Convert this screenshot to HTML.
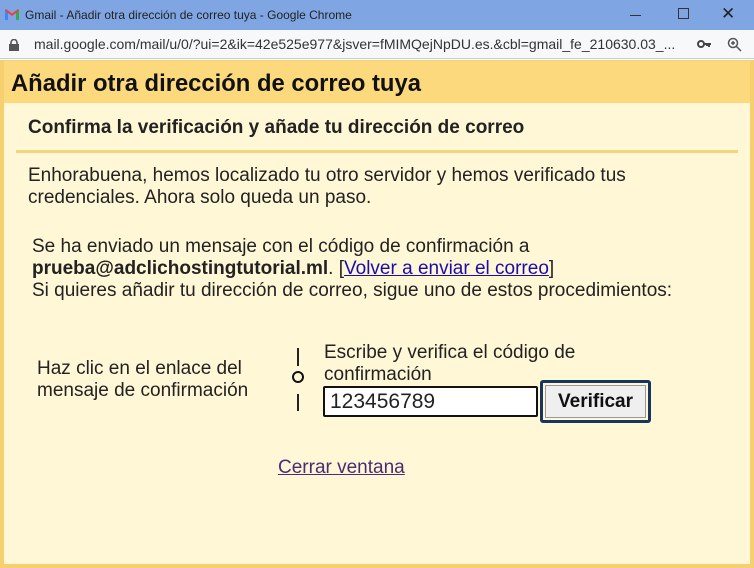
<!DOCTYPE html>
<html><head><meta charset="utf-8"><style>
*{margin:0;padding:0;box-sizing:border-box}
body{width:754px;height:568px;overflow:hidden;font-family:"Liberation Sans",Arial,sans-serif;background:#fff;position:relative}
.tb{position:absolute;left:0;top:0;width:754px;height:30px;background:#7fa6e3;color:#222;font-size:12px}
.ab{position:absolute;left:0;top:30px;width:754px;height:29px;background:#f7f8fa;border-bottom:1px solid #ccc;font-size:14px;color:#333}
.frame{position:absolute;left:0;top:60px;width:754px;height:508px;background:#fff7d6;border:4px solid #f6d06e;border-top:1px solid #f1d27a}
.hd{position:absolute;left:0;top:0;width:746px;height:42px;background:#fcd97c;font-size:23.8px;font-weight:bold;color:#111;padding:9px 0 0 7px}
.t{position:absolute;color:#222;font-size:19px;line-height:22px}
a{color:#1a0dab}
</style></head><body>
<div class="tb">
<svg style="position:absolute;left:5px;top:9px" width="14" height="11" viewBox="0 0 14 11"><path d="M0 1v10h3V4l4 3 4-3v7h3V1l-1-1-6 4.5L1 0z" fill="#ea4335"/><path d="M0 1v10h3V4z" fill="#4285f4"/><path d="M14 1v10h-3V4z" fill="#34a853"/></svg>
<span style="position:absolute;left:25px;top:8px">Gmail - Añadir otra dirección de correo tuya - Google Chrome</span>
<div style="position:absolute;left:630px;top:15px;width:11px;height:1px;background:#333"></div>
<div style="position:absolute;left:678px;top:8px;width:11px;height:11px;border:1px solid #333"></div>
<span style="position:absolute;left:721px;top:4px;font-size:17px;font-weight:300">✕</span>
</div>
<div class="ab">
<svg style="position:absolute;left:9px;top:9px" width="10" height="12" viewBox="0 0 10 12"><rect x="0" y="5" width="10" height="7" fill="#555"/><path d="M2 5V3.5a3 3 0 016 0V5" stroke="#555" stroke-width="1.6" fill="none"/></svg>
<span style="position:absolute;left:34px;top:6px">mail.google.com/mail/u/0/?ui=2&amp;ik=42e525e977&amp;jsver=fMIMQejNpDU.es.&amp;cbl=gmail_fe_210630.03_...</span>
<svg style="position:absolute;left:697px;top:10px" width="15" height="8" viewBox="0 0 15 8"><circle cx="4" cy="4" r="3" stroke="#444" stroke-width="2" fill="none"/><path d="M7 4h7M12 4v3M10 4v2" stroke="#444" stroke-width="2"/></svg>
<svg style="position:absolute;left:727px;top:7px" width="15" height="15" viewBox="0 0 15 15"><circle cx="6" cy="6" r="4.5" stroke="#555" stroke-width="1.5" fill="none"/><path d="M9.5 9.5L14 14M6 4v4M4 6h4" stroke="#555" stroke-width="1.5"/></svg>
</div>
<div class="frame">
<div class="hd">Añadir otra dirección de correo tuya</div>
<div class="t" style="left:24px;top:56px;font-weight:bold;font-size:19px">Confirma la verificación y añade tu dirección de correo</div>
<div style="position:absolute;left:12px;top:89px;width:722px;height:3px;background:#f3d57f"></div>
<div class="t" style="left:24px;top:104px">Enhorabuena, hemos localizado tu otro servidor y hemos verificado tus<br>credenciales. Ahora solo queda un paso.</div>
<div class="t" style="left:28px;top:175px">Se ha enviado un mensaje con el código de confirmación a<br><b>prueba@adclichostingtutorial.ml</b>. [<a href="#">Volver a enviar el correo</a>]<br>Si quieres añadir tu dirección de correo, sigue uno de estos procedimientos:</div>
<div class="t" style="left:33px;top:297px">Haz clic en el enlace del<br>mensaje de confirmación</div>
<div style="position:absolute;left:293px;top:287px;width:2px;height:18px;background:#222"></div>
<div style="position:absolute;left:288px;top:310px;width:12px;height:12px;border:2.5px solid #111;border-radius:50%"></div>
<div style="position:absolute;left:293px;top:333px;width:2px;height:17px;background:#222"></div>
<div class="t" style="left:320px;top:281px">Escribe y verifica el código de<br>confirmación</div>
<div style="position:absolute;left:319px;top:325px;width:215px;height:31px;background:#fff;border:2px solid #111;border-radius:2px;font-size:21px;padding:2px 0 0 5px;color:#222">123456789</div>
<div style="position:absolute;left:536px;top:319px;width:111px;height:43px;border:3px solid #17365d;border-radius:3px;padding:2px">
<div style="width:100%;height:100%;background:#efefef;border:1px solid #999;font-weight:bold;font-size:19px;text-align:center;line-height:31px;color:#111">Verificar</div></div>
<div class="t" style="left:274px;top:396px"><a href="#" style="color:#4b2c72">Cerrar ventana</a></div>
</div>
</body></html>
